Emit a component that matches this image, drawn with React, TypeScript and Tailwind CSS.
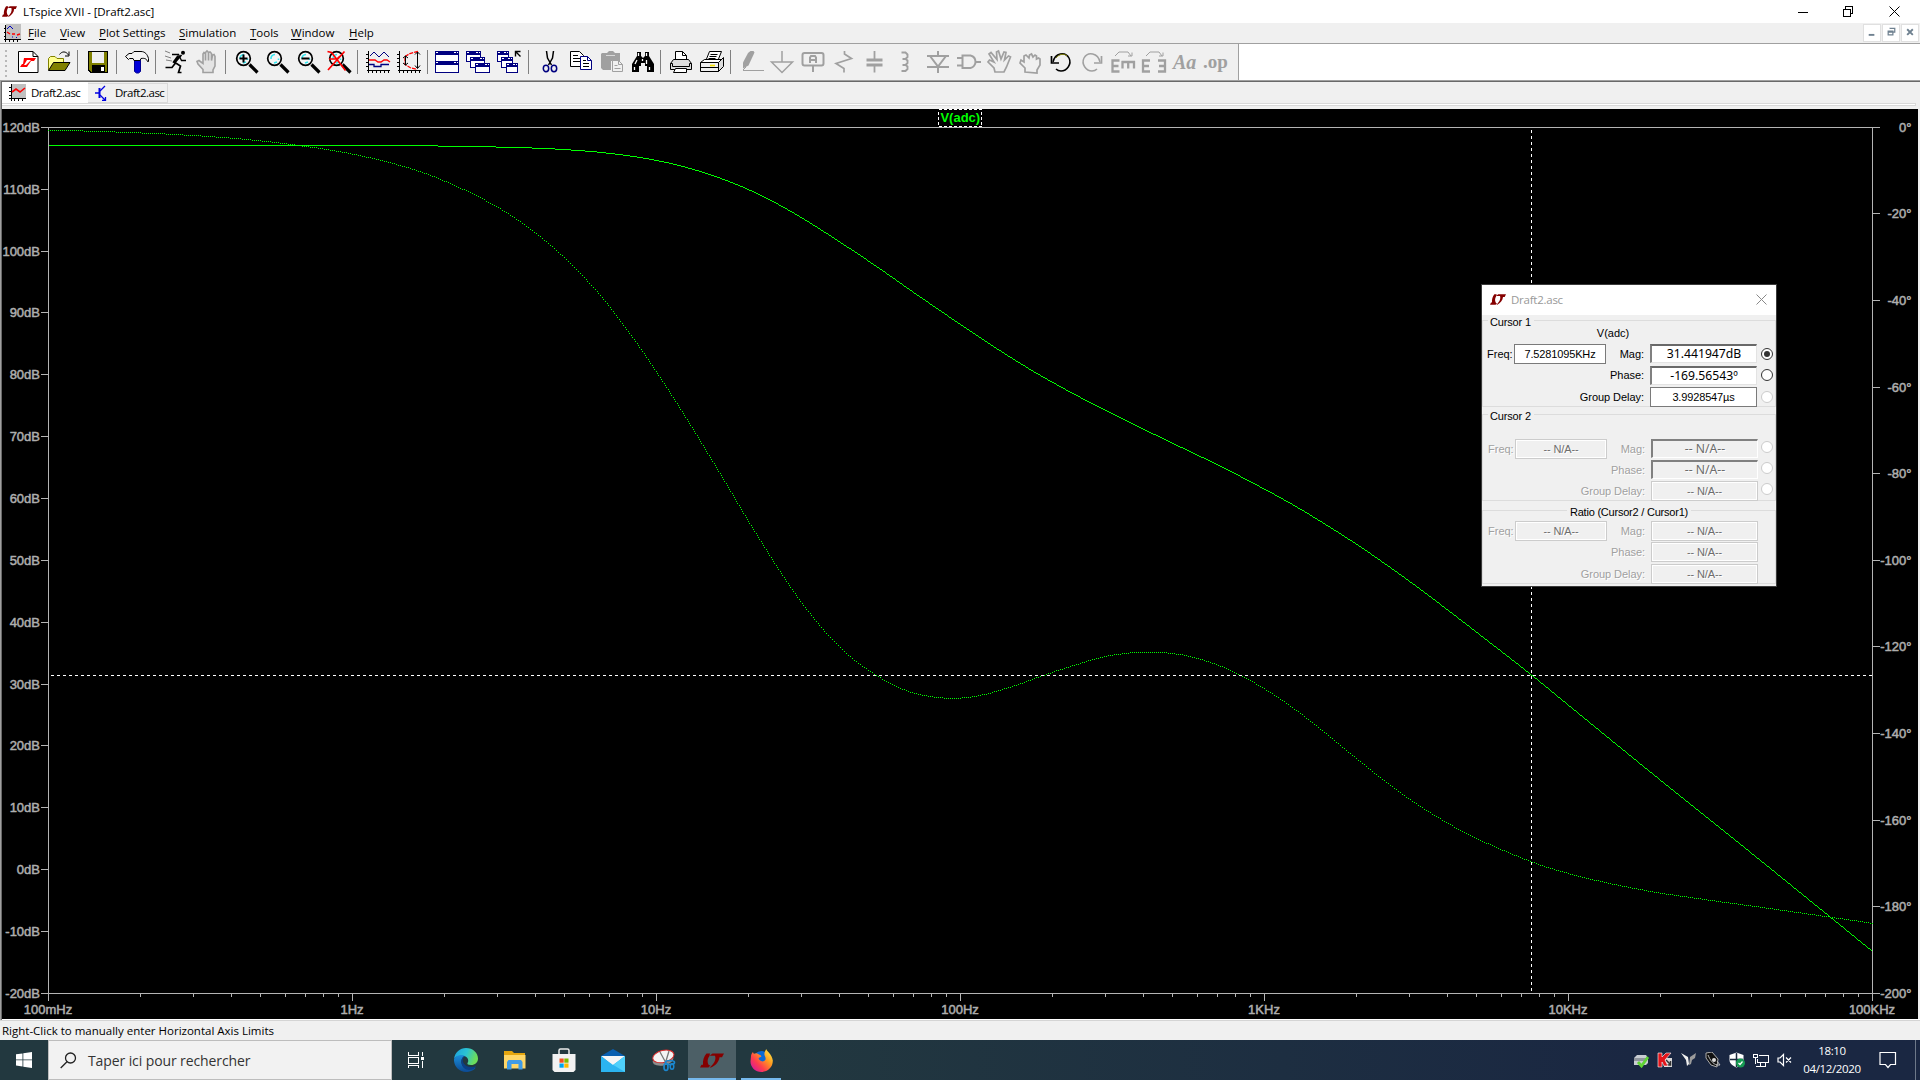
import React from "react";

const UI = "font-['Open_Sans','Noto_Sans',sans-serif]";
const G = "#a0a0a0";

function LtLogo({ className, hole = "transparent" }: { className: string; hole?: string }) {
  return (
    <svg viewBox="0 0 48 32" className={className} preserveAspectRatio="none">
      <path d="M24 4C16 8 13 20 19 28C27 24 33 12 31 4Z" fill={hole} />
      <path
        fillRule="evenodd"
        fill="#850000"
        d="M13 1H25C15 7 13 19 18 26H21L17 31H0L3 25H6C5 16 8 7 13 1ZM20 1H48L44 9H39C38 19 31 27 22 31H19C28 24 33 14 30 6H19Z"
      />
    </svg>
  );
}

function Icon({ children, w = "w-[31px]" }: { children: React.ReactNode; w?: string }) {
  return (
    <div className={`flex ${w} shrink-0 justify-center`}>
      <svg viewBox="0 0 24 24" className="h-6 w-6 shrink-0 overflow-visible" fill="none" stroke="#000" strokeWidth="1">
        {children}
      </svg>
    </div>
  );
}

function Group({ w, children }: { w: string; children: React.ReactNode }) {
  return <div className={`flex h-6 items-center justify-center ${w}`}>{children}</div>;
}

function Sep() {
  return <div className="h-6 w-px shrink-0 bg-[#808080]" />;
}

function Lens({ children }: { children?: React.ReactNode }) {
  return (
    <>
      <path d="M14.500 14.500L22.500 22.500" strokeWidth="3.200" />
      <circle cx="8.500" cy="8.500" r="6.800" strokeWidth="1.700" fill="#f4f4f4" />
      <path d="M5 9A4 4 0 0 1 9 4.500M12.500 8.500V10M8 13l3-1" stroke="#2fe6ef" strokeWidth="1.500" />
      {children}
    </>
  );
}

function Win({ x, y, w = 14, h = 10 }: { x: number; y: number; w?: number; h?: number }) {
  return (
    <g shapeRendering="crispEdges">
      <rect x={x + 0.5} y={y + 0.5} width={w} height={h} fill="#fff" stroke="#000080" />
      <rect x={x} y={y} width={w + 1} height="4" fill="#000080" stroke="none" />
      <path d={`M${x + 1} ${y + 1.5}h2M${x + w - 4} ${y + 1.5}h2M${x + w - 1} ${y + 1.5}h1`} stroke="#fff" />
    </g>
  );
}

const FIST = "M7 22v-4l-5-5 1-3 3 2V6l2-1 3 3 .5-3 2-1 1.500 3 2-2 1.500 1v3l2-1 1.500 1v6l-3 5v3z";

function Toolbar() {
  return (
    <div className="flex h-9 w-[1239px] items-center border-r border-[#a0a0a0] bg-[#f0f0f0]">
      <svg viewBox="0 0 13 36" className="h-9 w-[13px] shrink-0">
        {[6, 11, 16, 21, 26, 31].map((y) => (
          <rect key={y} x="5" y={y} width="2" height="2" fill="#b8b8b8" />
        ))}
      </svg>
      <Group w="w-[64px] pr-1">
        <Icon>
          <path d="M2.500 1.500H17l5 5V22.500H2.500z" fill="#fff" />
          <path d="M17 1.500V6.500H22" />
          <path d="M8 8h12l-2 3h-3l-4 6H4l2-3h1zM11 10l-3 5h2l5-5z" fill="#f00" stroke="none" fillRule="evenodd" />
        </Icon>
        <Icon>
          <path d="M1.500 20V8.500l2-2H8l2 2h6.500v4" fill="#ffff90" stroke="#808000" />
          <path d="M1.500 20.500L6.500 12.500H23L18 20.500z" fill="#808000" />
          <path d="M12.500 4.500C15 1 19 1 21.500 5M22 1.500v4.500h-4" />
        </Icon>
      </Group>
      <Sep />
      <Group w="w-[38px] pl-0.5">
        <Icon>
          <g shapeRendering="crispEdges">
            <path d="M2 1h20v22H4l-2-2z" fill="#000" stroke="none" />
            <path d="M3 2h3v11h12V2h3v20h-2v-7H6v7H5l-2-2z" fill="#808000" stroke="none" />
            <path d="M6 2h12v11H6z" fill="#efefef" stroke="none" />
            <path d="M15 17h3v4h-3z" fill="#fff" stroke="none" />
          </g>
        </Icon>
      </Group>
      <Sep />
      <Group w="w-[38px] pl-0.5">
        <Icon>
          <path d="M9.500 9.500h6v12l-2 1.500h-2l-2-1.500z" fill="#0000d8" stroke="#000090" />
          <path d="M.5 6.500L4 3.500h3l2-2h7c4 0 6.500 3 7.500 7v3h-1c-1-3-3-3.500-6.500-3l-1 2h-6l-1-2H4.500l-1 1z" fill="#f4f4f4" />
        </Icon>
      </Group>
      <Sep />
      <Group w="w-[69px] pl-0.5">
        <Icon>
          <circle cx="19" cy="2.800" r="2" fill="#000" stroke="none" />
          <path d="M17.500 5L11 12.500l5.500 3.500-2 6.500h3M11.500 13L8 17.500H1.500" strokeWidth="1.700" />
          <path d="M8 4.500h6.500l3 6H22" strokeWidth="1.300" />
          <path d="M14.500 6L9.500 13" strokeWidth="2.800" />
          <path d="M1 1l5 2M1 6l6 2M2 10l6 1" stroke="#808080" />
        </Icon>
        <Icon>
          <path
            d="M8 22.500v-3L3 14l-1-2.500 2-1 4 3V4l1-1.500L10.500 4V10.500 2.500L12 1l1.500 1.500v8V2.500L15 2l1.500 1.500v7L17.500 5 19 4.500l1 2V16l-2 4v2.500z"
            fill="#e4e4e4"
            stroke={G}
            strokeWidth="1.600"
          />
        </Icon>
      </Group>
      <Sep />
      <Group w="w-[131px] pl-1">
        <Icon>
          <Lens>
            <path d="M8.500 4.500v8M4.500 8.500h8" strokeWidth="2" />
          </Lens>
        </Icon>
        <Icon>
          <Lens />
        </Icon>
        <Icon>
          <Lens>
            <path d="M4.500 8.500h8" strokeWidth="2" />
          </Lens>
        </Icon>
        <Icon>
          <Lens>
            <path d="M-.5 1.500l4 1 14 18M16.500 1.500L0 20M1 9h8l3-3" stroke="#f00" strokeWidth="1.700" />
          </Lens>
        </Icon>
      </Group>
      <Sep />
      <Group w="w-[69px] pl-0.5">
        <Icon>
          <path d="M2.500 1v22M.5 20.500H24M0 4.500h3M0 8.500h3M0 12.500h3M0 16.500h3M6.500 20v3M10.500 20v3M14.500 20v3M18.500 20v3M22.500 20v3" shapeRendering="crispEdges" />
          <path d="M4 6l4-4 5 5 5-5 5 5" stroke="#000080" />
          <path d="M3 10h6l3 2h3l3-2h3l3 2" stroke="#f00" strokeWidth="1.400" />
          <path d="M3 14.500h5v2h7v-2h8" stroke="#000080" strokeWidth="1.300" />
        </Icon>
        <Icon>
          <path d="M2.500 1v22M.5 20.500H24M0 4.500h3M0 8.500h3M0 12.500h3M0 16.500h3M6.500 20v3M10.500 20v3M14.500 20v3M18.500 20v3M22.500 20v3" shapeRendering="crispEdges" />
          <path d="M21 1.500l-8 2-5 3v8l5 3 7 2" stroke="#f00" strokeWidth="1.300" strokeDasharray="4 1" />
          <path d="M20.500 2v16M18 4.500L20.500 2 23 4.500M18 15.500l2.500 3 2.500-3M8.500 6v9M6 8l2.500-2L11 8M6 13l2.500 2 2.500-2" />
        </Icon>
      </Group>
      <Sep />
      <Group w="w-[100px]">
        <Icon>
          <Win x={0} y={1} w={23} h={10} />
          <Win x={0} y={11} w={23} h={11} />
        </Icon>
        <Icon>
          <Win x={0} y={1} />
          <Win x={4} y={7} />
          <Win x={9} y={13} h={9} />
        </Icon>
        <Icon>
          <Win x={0} y={1} w={11} />
          <Win x={4} y={7} w={11} />
          <Win x={9} y={13} w={11} h={9} />
          <path d="M18.500 6.500v-5h5M18.500 1.500l5 5" strokeWidth="1.400" />
        </Icon>
      </Group>
      <Sep />
      <Group w="w-[131px] pl-1">
        <Icon>
          <path d="M8.500 1l1 7 4 7M15.500 1l-1 7-4 7" strokeWidth="1.500" />
          <ellipse cx="8" cy="18.500" rx="2.700" ry="3.200" stroke="#000080" strokeWidth="1.500" />
          <ellipse cx="16" cy="18.500" rx="2.700" ry="3.200" stroke="#000080" strokeWidth="1.500" />
        </Icon>
        <Icon>
          <path d="M1.500 1.500h9l4 4v11h-13z" fill="#fff" />
          <path d="M4 5.500h5M4 8.500h7M4 11.500h7" />
          <path d="M11.500 6.500h7l4 4v9h-11z" fill="#fff" stroke="#000080" />
          <path d="M18.500 6.500v4h4" stroke="#000080" />
          <path d="M14 10.500h3M14 13.500h6M14 16.500h6" />
        </Icon>
        <Icon>
          <path d="M2 3h5l2-2h4l2 2h5v8h-9v9H3l-2-2V4z" fill={G} stroke="none" />
          <path d="M6 5.500h9" stroke="#d8d8d8" />
          <path d="M12.500 10.500h6l4 4v7h-10z" fill="#f0f0f0" stroke={G} />
          <path d="M18.500 10.500v4h4M14.500 15.500h3M14.500 18.500h6" stroke={G} />
        </Icon>
        <Icon>
          <path d="M6 2h4v4l2 2 2-2V2h4v4l5 8v8h-7v-6h-2v-3h-4v3H8v6H1v-8l5-8z" fill="#000" stroke="none" />
          <path d="M7.500 3v3M15.500 3v3M4 14l2-4M15.500 14v-4M3.500 17v3M18.500 17v3M11.500 9v2" stroke="#fff" strokeWidth="1.300" />
        </Icon>
      </Group>
      <Sep />
      <Group w="w-[69px] pl-0.5">
        <Icon>
          <path d="M6.500 9.500v-8h7l4 4v4" fill="#fff" />
          <path d="M13.500 1.500v4h4" />
          <path d="M1.500 19.500v-6l3-4h15l3 4v6z" fill="#ddd" />
          <path d="M1.500 13.500h2v3h17v-3h2" />
          <path d="M6.500 18.500h11v4h-13z" fill="#fff" />
        </Icon>
        <Icon>
          <path d="M5.500 11.500l4-10h12l-4 10z" fill="#fff" />
          <path d="M10.500 4.500h7M9.500 6.500h7M8.500 8.500h7" />
          <path d="M.5 12.500l4-3h18l-4 3z" fill="#fff" />
          <path d="M.5 12.500h18v9H.5zM.5 17.500h18" fill="#f0f0f0" />
          <path d="M18.500 12.500l5-5v9l-5 5z" fill="#ddd" />
          <path d="M10 15.500h5" stroke="#f4e000" strokeWidth="1.600" />
        </Icon>
      </Group>
      <Sep />
      <div className="flex h-6 w-[507px] shrink-0 items-center justify-center">
        <Icon w="w-[30.8px]">
          <g transform="translate(-1 0)">
            <path d="M9.500 1h3l1 1.500-6 13L2 18.500v-6L7 3z" fill={G} stroke="none" />
            <path d="M2 20.500h21M2 20l3-3" stroke={G} />
          </g>
        </Icon>
        <Icon w="w-[30.8px]">
          <path transform="translate(-2 0)" d="M12 1v11M1.500 12h21L12 22.500z" stroke={G} strokeWidth="1.500" />
        </Icon>
        <Icon w="w-[30.8px]">
          <g transform="translate(-2 0)">
            <rect x="1.500" y="3" width="21" height="12.500" rx="2" stroke={G} strokeWidth="2" />
            <path d="M12 15.500V22M9 13V7.500l1-1.500h4l1 1.500V13M9 10h6" stroke={G} strokeWidth="2" />
          </g>
        </Icon>
        <Icon w="w-[30.8px]">
          <path transform="translate(-2 0)" d="M12.500 1v3l7 4.500L4 13.500l8 5V22.500" stroke={G} strokeWidth="1.700" />
        </Icon>
        <Icon w="w-[30.8px]">
          <g transform="translate(-2.500 0)">
            <path d="M12 1v9M12 15v7.500" stroke={G} strokeWidth="1.800" />
            <path d="M4 10h16M4 15h16" stroke={G} strokeWidth="3" />
          </g>
        </Icon>
        <Icon w="w-[30.8px]">
          <path
            transform="translate(-3 0)"
            d="M8.500 2.500h4l2 2v2.500l-2 2h-3M9.500 9h3l2 1.500v2.500l-2 2h-3M9.500 15h3l2 1.500v2.500l-2 2h-4"
            stroke={G}
            strokeWidth="1.900"
          />
        </Icon>
        <Icon w="w-[30.8px]">
          <path d="M12 1v4M12 17v6M1 6h22M1 17h22M4 6l8 10.500L20 6" stroke={G} strokeWidth="2" />
        </Icon>
        <Icon w="w-[30.8px]">
          <path d="M5.500 5.500h8c4 1 5 4 5 6.500s-2 5.500-5 6h-8zM0 8h5.500M0 15.500h5.500M18.500 12H24" stroke={G} strokeWidth="2" />
        </Icon>
        <Icon w="w-[30.8px]">
          <path
            transform="translate(-1 0)"
            d="M8 22l-1-4-6-6 1.500-2L7 12 2 4l2-1.500 6 7L9.500 2l2-1L14 9l3-7 2 .5L17.500 10l4-4 2 1-4 10-2.500 5z"
            stroke={G}
            strokeWidth="1.700"
          />
        </Icon>
        <Icon w="w-[30.8px]">
          <path transform="translate(-1 0)" d={FIST} stroke={G} strokeWidth="1.700" />
        </Icon>
        <Icon w="w-[30.8px]">
          <path d="M4 12C6 3 16 1 20 8c3 6-2 13-8 13-3 0-4-1-5-2" strokeWidth="1.500" />
          <path d="M7 8c3-4 8-5 11-2" stroke="#808000" />
          <path d="M2.500 6v7H10" strokeWidth="1.700" />
        </Icon>
        <Icon w="w-[30.8px]">
          <path d="M20 12C18 3 8 1 4 8c-3 6 2 13 8 13 3 0 4-1 5-2" stroke={G} strokeWidth="1.500" />
          <path d="M21.500 6v7H14" stroke={G} strokeWidth="1.700" />
        </Icon>
        <Icon w="w-[30.8px]">
          <path d="M8.500 10.500H1.500v11h7M1.500 16h6M10.500 12h13.500M11.500 11v7.500M17.200 11v7.500M23 11v7.500" stroke={G} strokeWidth="2.300" />
          <path d="M4 6l4-4h9l3 4M17 6h4V2.500" stroke={G} />
        </Icon>
        <Icon w="w-[30.8px]">
          <path d="M8 10.500H1v11h7M1 16h6M16 10.500h7v11h-7M17 16h6" stroke={G} strokeWidth="2.300" />
          <path d="M4 6l4-4h9l3 4M17 6h4V2.500" stroke={G} />
        </Icon>
        <div className="flex w-[30.8px] justify-center font-['Liberation_Serif',serif] text-[20px] leading-6 font-bold text-[#a0a0a0] italic">Aa</div>
        <div className="flex w-[30.8px] justify-center font-['Liberation_Serif',serif] text-[19px] leading-[22px] font-bold text-[#a0a0a0]">.op</div>
      </div>
    </div>
  );
}

const MAG: number[][] = [
  [48, 145.3], [300, 145.3], [390, 145.5], [438, 146], [500, 147.1], [534, 148.1], [556, 149.1], [586, 151.1], [606, 153], [639.5, 157.5],
  [679, 165.6], [718.6, 177.8], [758.2, 194.3], [797.7, 215.7], [837.2, 240.6], [876.8, 267], [916.3, 294.6], [955.9, 321.7],
  [995.4, 348], [1035, 372.6], [1074.5, 394.6], [1100, 407.7], [1140, 427.7], [1180, 447], [1220, 466.3], [1260, 487],
  [1290, 503.4], [1320, 521.3], [1356.1, 544.3], [1383.7, 563.2], [1411.2, 582.9], [1438.8, 603.6], [1475.5, 631.8],
  [1531.5, 675.4], [1568.2, 705.4], [1659.1, 779.5], [1751, 853.2], [1828.1, 915.7], [1872, 951.4],
];

const PHASE: number[][] = [
  [48, 130], [84, 131], [116, 132], [142, 133], [184, 135], [216, 137], [261, 141], [302, 146], [339, 151.7], [371.4, 158.3],
  [408.2, 168], [438.4, 178.7], [473.5, 194.6], [506, 212.5], [530.6, 229.7], [555, 249.6], [579.6, 273.3], [604, 300.2],
  [639.5, 347.5], [679, 407], [718.6, 471.5], [758.2, 537.5], [797.7, 597.7], [837.2, 645.1], [872.8, 673.4], [908.4, 691.5],
  [948, 698.3], [980, 695.3], [1015, 685.5], [1043.3, 675.3], [1070, 666.5], [1103, 657], [1133, 652.6], [1153, 652.2],
  [1173, 653.7], [1193, 657.3], [1220, 666], [1240, 675.3], [1270, 692.5], [1293, 708.3], [1320, 729], [1356, 758.6],
  [1402, 794.3], [1448, 823.6], [1482.4, 841.4], [1531.5, 862], [1568.2, 873.6], [1613.2, 884.3], [1659, 892.9],
  [1718.8, 901.6], [1751, 906], [1829, 917], [1872, 923.3],
];

/** Cubic Hermite interpolation of a list of points, one integer y for each x. */
function sample(points: number[][]): number[] {
  const slope = points.map((_, i) => {
    const a = points[Math.max(0, i - 1)];
    const b = points[Math.min(points.length - 1, i + 1)];
    return (b[1] - a[1]) / (b[0] - a[0]);
  });
  const out: number[] = [];
  let k = 0;
  for (let x = 48; x <= 1872; x++) {
    while (k < points.length - 2 && x > points[k + 1][0]) k++;
    const [x0, y0] = points[k];
    const [x1, y1] = points[k + 1];
    const h = x1 - x0;
    const t = (x - x0) / h;
    const y =
      (2 * t ** 3 - 3 * t ** 2 + 1) * y0 +
      (t ** 3 - 2 * t ** 2 + t) * h * slope[k] +
      (3 * t ** 2 - 2 * t ** 3) * y1 +
      (t ** 3 - t ** 2) * h * slope[k + 1];
    out.push(Math.floor(y));
  }
  return out;
}

const magPath = "M" + sample(MAG).map((y, i) => `${48.5 + i} ${y + 0.5}`).join("L");

const phasePath = (() => {
  const ys = sample(PHASE);
  let n = 0;
  let d = "";
  ys.forEach((y, i) => {
    const next = i + 1 < ys.length ? ys[i + 1] : y;
    const steps = Math.max(1, Math.abs(next - y));
    for (let s = 0; s < steps; s++) {
      if (n % 2 === 0) d += `M${48 + i} ${y + s * Math.sign(next - y)}h1v1h-1z`;
      n++;
    }
  });
  return d;
})();

const DB = Array.from({ length: 15 }, (_, i) => 120 - 10 * i);
const DEG = Array.from({ length: 11 }, (_, i) => -20 * i);
const HZ = ["100mHz", "1Hz", "10Hz", "100Hz", "1KHz", "10KHz", "100KHz"];

function Plot() {
  let ticks = "";
  DB.forEach((_, i) => (ticks += `M41 ${Math.floor(127.3 + i * 61.857) + 0.5}h8`));
  DEG.forEach((_, i) => (ticks += `M1872 ${Math.floor(127.3 + i * 86.6) + 0.5}h8`));
  for (let d = 0; d < 6; d++) {
    ticks += `M${48.5 + d * 304} 993v8`;
    for (let m = 2; m < 10; m++) ticks += `M${Math.round(48 + 304 * (d + Math.log10(m))) + 0.5} 993v4`;
  }
  return (
    <svg
      viewBox="2 109 1916 910"
      className="block h-[910px] w-[1916px] bg-black font-['Liberation_Sans',Arial,sans-serif] text-[13px]"
    >
      <g stroke="#b4b4b4" fill="none" shapeRendering="crispEdges">
        <path d="M41 127.500H1880M41 993.500H1880M48.500 127V1001M1872.500 127V1001" />
        <path d={ticks} />
      </g>
      <path d={phasePath} fill="#00ff00" shapeRendering="crispEdges" />
      <path d={magPath} fill="none" stroke="#00ff00" shapeRendering="crispEdges" />
      <g stroke="#fff" strokeDasharray="3 3" shapeRendering="crispEdges">
        <path d="M51 675.500H1872" />
        <path d="M1531.500 130V993" />
      </g>
      <g fill="#aeaeae" stroke="#aeaeae" strokeWidth="0.500">
        {DB.map((v, i) => (
          <text key={v} x="40" y={Math.floor(132.3 + i * 61.857)} textAnchor="end">{`${v}dB`}</text>
        ))}
        {DEG.map((v, i) => (
          <text key={v} x="1911.500" y={Math.floor(132.3 + i * 86.6)} textAnchor="end">{`${v === 0 ? 0 : v}°`}</text>
        ))}
        {HZ.map((v, i) => (
          <text key={v} x={48 + i * 304} y="1014" textAnchor="middle">
            {v}
          </text>
        ))}
      </g>
      <rect x="938.500" y="109.500" width="43" height="17" fill="#000" stroke="#fff" strokeDasharray="3 2" shapeRendering="crispEdges" />
      <text x="960.300" y="122" textAnchor="middle" fill="#00ff00" className="font-bold">
        V(adc)
      </text>
    </svg>
  );
}

function Field({ v, w, kind, big = false }: { v: string; w: string; kind: "on" | "off" | "sunkOn" | "sunkOff"; big?: boolean }) {
  const look = {
    on: "h-5 border border-[#7a7a7a] bg-white text-black",
    off: "h-5 border border-[#cccccc] bg-[#f0f0f0] text-[#6d6d6d] shadow-[inset_0_0_0_1px_#fff]",
    sunkOn: "h-[19px] border-t-2 border-l-2 border-r border-b border-t-[#696969] border-l-[#808080] border-r-[#e3e3e3] border-b-[#e3e3e3] bg-white text-black",
    sunkOff: "h-[19px] border-t-2 border-l-2 border-r border-b border-t-[#808080] border-l-[#808080] border-r-[#fff] border-b-[#fff] bg-[#f0f0f0] text-[#6d6d6d]",
  }[kind];
  return (
    <div
      className={`flex shrink-0 items-center justify-center whitespace-nowrap ${w} ${look} ${
        big ? "font-['Noto_Sans',sans-serif] text-[12.2px]" : "text-[11px] tracking-[-0.15px]"
      }`}
    >
      {v}
    </div>
  );
}

function Radio({ state }: { state: "sel" | "on" | "off" | "none" }) {
  if (state === "none") return <div className="w-3" />;
  return (
    <div
      className={`flex h-3 w-3 items-center justify-center rounded-full border bg-white ${
        state === "off" ? "border-[#cccccc]" : "border-[#333333]"
      }`}
    >
      {state === "sel" && <div className="h-1.5 w-1.5 rounded-full bg-[#333333]" />}
    </div>
  );
}

type RowProps = {
  freq?: string;
  label: string;
  v: string;
  radio: "sel" | "on" | "off" | "none";
  enabled: boolean;
  sunk?: boolean;
  h: string;
};

function Row({ freq, label, v, radio, enabled, sunk, h }: RowProps) {
  const text = enabled ? "text-black" : "text-[#a0a0a0] [text-shadow:1px_1px_0_#fff]";
  return (
    <div className={`flex items-center ${h} ${text} ${enabled ? "" : "pl-px"}`}>
      <div className="w-8 pl-[5px]">{freq ? "Freq:" : ""}</div>
      <div className="w-[92px]">{freq && <Field v={freq} w="w-[92px]" kind={enabled ? "on" : "off"} />}</div>
      <div className="-ml-8 flex-1 pr-[6px] text-right tracking-[-0.05px] whitespace-nowrap">{label}</div>
      <Field v={v} w="w-[107px]" kind={sunk ? (enabled ? "sunkOn" : "sunkOff") : enabled ? "on" : "off"} big={sunk} />
      <div className={`shrink-0 ${enabled ? "w-[19px] pl-[4px]" : "w-[18px] pb-[3px] pl-[3px]"}`}>
        <Radio state={radio} />
      </div>
    </div>
  );
}

function CursorDialog() {
  return (
    <div className="absolute top-[284px] left-[1481px] h-[303px] w-[296px] border border-[#3a3a3a] bg-[#f0f0f0] font-['Liberation_Sans',Arial,sans-serif] text-[11px] leading-3 text-black">
      <div className="flex h-[30px] items-center bg-white pr-[9px] pb-px pl-[8px]">
        <LtLogo className="h-[11px] w-4" />
        <div className={`ml-[5px] flex-1 text-[11.5px] tracking-[-0.25px] text-[#999999] ${UI}`}>Draft2.asc</div>
        <svg viewBox="0 0 11 11" className="h-[11px] w-[11px]">
          <path d="M.5.5l10 10M10.500.5l-10 10" stroke="#888" />
        </svg>
      </div>
      <div className="mt-[5px] h-[87px] border border-[#dcdcdc]">
        <div className="-mt-[5px] ml-[5px] w-fit bg-[#f0f0f0] pr-[3px] pl-[2px] tracking-[-0.15px]">Cursor 1</div>
        <div className="h-[9px] w-[260px] text-center leading-[11px]">V(adc)</div>
        <div className="mt-[6px] -mr-px -ml-px">
          <Row h="h-[21px]" freq="7.5281095KHz" label="Mag:" v="31.441947dB" radio="sel" enabled sunk />
          <Row h="h-[22px]" label="Phase:" v="-169.56543º" radio="on" enabled sunk />
          <Row h="h-[21px]" label="Group Delay:" v="3.9928547µs" radio="off" enabled />
        </div>
      </div>
      <div className="mt-[7px] h-[87px] border border-[#dcdcdc]">
        <div className="-mt-[5px] ml-[5px] w-fit bg-[#f0f0f0] pr-[3px] pl-[2px] tracking-[-0.15px]">Cursor 2</div>
        <div className="mt-[16px] -mr-px -ml-px">
          <Row h="h-[21px]" freq="-- N/A--" label="Mag:" v="-- N/A--" radio="off" enabled={false} sunk />
          <Row h="h-[21px]" label="Phase:" v="-- N/A--" radio="off" enabled={false} sunk />
          <Row h="h-[21px]" label="Group Delay:" v="-- N/A--" radio="off" enabled={false} />
        </div>
      </div>
      <div className="mt-[9px] h-[74px] border border-[#dcdcdc]">
        <div className="mx-auto -mt-[5px] w-fit bg-[#f0f0f0] px-[3px] tracking-[-0.22px]">Ratio (Cursor2 / Cursor1)</div>
        <div className="mt-[2px] -mr-px -ml-px">
          <Row h="h-[21px]" freq="-- N/A--" label="Mag:" v="-- N/A--" radio="none" enabled={false} />
          <Row h="h-[22px]" label="Phase:" v="-- N/A--" radio="none" enabled={false} />
          <Row h="h-[21px]" label="Group Delay:" v="-- N/A--" radio="none" enabled={false} />
        </div>
      </div>
    </div>
  );
}

function Task({ children, cls = "" }: { children: React.ReactNode; cls?: string }) {
  return <div className={`flex h-10 w-12 items-center justify-center ${cls}`}>{children}</div>;
}

function Tray({ children }: { children: React.ReactNode }) {
  return (
    <svg viewBox="0 0 16 16" className="h-4 w-4" fill="none">
      {children}
    </svg>
  );
}

function Taskbar() {
  return (
    <div className={`flex h-10 items-center bg-linear-to-r from-[#22383f] from-40% to-[#1a2742] to-85% text-white ${UI}`}>
      <div className="flex w-12 justify-center">
        <svg viewBox="0 0 16 16" className="h-4 w-4" fill="#fff">
          <path d="M0 2.300L6.500 1.400V7.500H0zM7.300 1.300L16 0V7.500H7.300zM0 8.300H6.500V14.500L0 13.600zM7.300 8.300H16V16L7.300 14.700z" />
        </svg>
      </div>
      <div className="flex h-10 w-[344px] items-center border border-[#bdbdbd] bg-[#f2f2f2] pl-[11px] text-[#333]">
        <svg viewBox="0 0 17 17" className="h-[17px] w-[17px]" fill="none" stroke="#222" strokeWidth="1.300">
          <circle cx="10.500" cy="6" r="5" />
          <path d="M7 9.700L.7 16" />
        </svg>
        <div className="ml-[11px] pt-px text-[14px] leading-5 tracking-[-0.1px]">Taper ici pour rechercher</div>
      </div>
      <div className="flex gap-px">
        <Task cls="mr-px">
          <svg viewBox="0 0 16 16" className="h-4 w-4" fill="none" stroke="#fff" shapeRendering="crispEdges">
            <path d="M.5 0v3.500h10V0M.5 5.500h10v6H.5zM.5 16v-2.500h10V16M14.500 0v4M14.500 9v7" />
            <path d="M13 5h3v3h-3z" fill="#fff" stroke="none" />
          </svg>
        </Task>
        <Task>
          <svg viewBox="0 0 24 24" className="h-6 w-6">
            <defs>
              <linearGradient id="edgeTop" x1="0" y1="0" x2="1" y2="0.300">
                <stop offset="0" stopColor="#1ba0e0" />
                <stop offset="0.550" stopColor="#2bc3d2" />
                <stop offset="1" stopColor="#6ddc5a" />
              </linearGradient>
              <linearGradient id="edgeLow" x1="0" y1="0" x2="0" y2="1">
                <stop offset="0" stopColor="#1b8fdc" />
                <stop offset="1" stopColor="#0c4a93" />
              </linearGradient>
            </defs>
            <path d="M0 11C1 4 6 0 12 0c7 0 12 5 12 10.500 0 4-3 6.500-7 6.500-3 0-4-1-3.500-2 1.500-1.500 1-6-3.500-7C5 7 1 9 0 11z" fill="url(#edgeTop)" />
            <path d="M0 11C2 7 8 6 11 8c-3 1-4 4-3.500 7 .7 4 5 7 11 5.500 1.500-.5 2.500-1 3-.7C20 22.500 16 24 12 24 5 24-.5 18 0 11z" fill="url(#edgeLow)" />
            <path d="M7.500 15C7 11 9 8 11 8c-5 4-1 12 8 11l3-1c-1 3-4 4-7 4-4 0-7-3-7.500-7z" fill="#0b3f86" />
          </svg>
        </Task>
        <Task>
          <svg viewBox="0 0 22 20" className="h-5 w-[22px]">
            <path d="M0 1h8l2 2h11v15H0z" fill="#e5a50e" />
            <path d="M0 5h21.500v13.500H0z" fill="#ffd667" />
            <path d="M3 19.500V12l1.500-2h12.500l1.500 2v7.500h-4V14H7.500v5.500z" fill="#3f9be6" />
          </svg>
        </Task>
        <Task>
          <svg viewBox="0 0 24 24" className="h-6 w-6">
            <path d="M7 7V2.500C7 1 7.500 1 8.500 1h7C17 1 17 1.500 17 2.500V7" fill="none" stroke="#ececec" strokeWidth="1.500" />
            <path d="M.5 6h23v16l-2 2h-19l-2-2z" fill="#f2f2f2" />
            <path d="M7.500 10.500h4.200v4.200H7.500z" fill="#f25022" />
            <path d="M12.300 10.500h4.200v4.200h-4.200z" fill="#7fba00" />
            <path d="M7.500 15.500h4.200v4.200H7.500z" fill="#00a4ef" />
            <path d="M12.300 15.500h4.200v4.200h-4.200z" fill="#ffb900" />
          </svg>
        </Task>
        <Task>
          <svg viewBox="0 0 24 23" className="h-[23px] w-6">
            <path d="M0 7L12 0l12 7v5H0z" fill="#0a5fb0" />
            <path d="M0 7h24L12 17z" fill="#f5f5f5" />
            <path d="M0 7l12 9 12-9v16H0z" fill="#2bb4f0" />
            <path d="M24 7v16L9 14l3 2z" fill="#4fd0fb" />
          </svg>
        </Task>
        <Task cls="pl-1">
          <svg viewBox="0 0 24 24" className="h-6 w-6" fill="none">
            <ellipse cx="11" cy="12" rx="10.500" ry="5.500" fill="#8d8d8d" transform="rotate(-12 11 12)" />
            <ellipse cx="11.500" cy="8.500" rx="10.800" ry="6" fill="#f4f4f4" stroke="#d62a2a" transform="rotate(-14 11 9)" />
            <path d="M8 4l6 11M17 3l-3 10" stroke="#777" strokeWidth="1.300" />
            <ellipse cx="18" cy="14.500" rx="4.500" ry="2" stroke="#1b87cf" strokeWidth="1.700" />
            <ellipse cx="14" cy="19" rx="2" ry="3.500" stroke="#1b87cf" strokeWidth="1.700" />
            <ellipse cx="20" cy="18.500" rx="1.800" ry="2.800" stroke="#1b87cf" strokeWidth="1.500" />
          </svg>
        </Task>
        <Task cls="ml-px border-b-2 border-[#76b9ed] bg-[#4c5f66]">
          <LtLogo className="mt-0.5 h-[15px] w-6" />
        </Task>
        <Task cls="relative">
          <svg viewBox="0 0 24 24" className="h-[23px] w-[23px]">
            <defs>
              <linearGradient id="fox" x1="1" y1="0.100" x2="0.200" y2="0.900">
                <stop offset="0" stopColor="#fff14a" />
                <stop offset="0.400" stopColor="#ff9a1f" />
                <stop offset="0.750" stopColor="#ff3d4d" />
                <stop offset="1" stopColor="#e0218a" />
              </linearGradient>
            </defs>
            <circle cx="12" cy="11" r="9" fill="#0a6ad6" />
            <path d="M1 8c0-2 1-4 2-5l1 2 3-.5C9 6 11 6 12 7.500c-1 1.500-3 1-3 2.500 1 3 5 4 7 1.500 1-3-1-4-1-6 0-2 1-4 2-5.500 0 2 6 5 6.800 12C24 19 18.500 24 12 24S.5 19 .5 13z" fill="url(#fox)" />
          </svg>
          <div className="absolute bottom-0 left-1 h-0.5 w-10 bg-[#76b9ed]" />
        </Task>
      </div>
      <div className="ml-auto flex items-center gap-2">
        <Tray>
          <path d="M1 6l3-3h9l2 3v5l-2 2H1z" fill="#c9cdd2" />
          <path d="M1 6h13v3H1z" fill="#8f959c" />
          <path d="M5 10l3.500 4L15 5" stroke="#5fd435" strokeWidth="2.800" />
        </Tray>
        <Tray>
          <path d="M7 6h8v9H7z" fill="#d9d9d9" />
          <path d="M9 8l4 4M13.500 9v4h-4" stroke="#333" strokeWidth="1.500" />
          <path d="M1 1h4v4l4-4h5L8 8l3 6H7L5 10v5H1z" fill="#e3151b" stroke="#fff" strokeWidth="0.600" />
        </Tray>
        <Tray>
          <path d="M0 1l7 4 1 7-2 2-1-6z" fill="#f0f0f0" />
          <path d="M15 1l-6 4-1 8 2-1 1-4 3-2z" fill="#9c9c9c" />
        </Tray>
        <Tray>
          <path d="M1 1l6-1 6 7-1 8-6-2-5-7z" fill="#111" stroke="#aaa" />
          <path d="M3 3c2 5 5 9 9 10M12 9l3 4M11 13h4" stroke="#bbb" />
          <circle cx="9" cy="8" r="2" fill="#ddd" />
        </Tray>
        <Tray>
          <path d="M7.500.5L14.500 3v5c0 4-4 6-7 7.500C4.500 14 .5 12 .5 8V3z" fill="#fff" />
          <path d="M7.500 1v14M1 7.500h13" stroke="#1c2a3f" strokeWidth="1.500" />
          <circle cx="11.500" cy="11" r="4.500" fill="#169b53" />
          <path d="M9.500 11l1.500 1.500 2.500-3" stroke="#fff" strokeWidth="1.200" />
        </Tray>
        <Tray>
          <path d="M5.500 3.500h10v7h-11v-4M7.500 11v3M3 14.500h10M12 11v3M.5 2.500h4v3h-4zM2.500 6v6" stroke="#fff" shapeRendering="crispEdges" />
        </Tray>
        <Tray>
          <path d="M1 6h2l3.500-3.500v11L3 10H1zM9 5.500l5 5M14 5.500l-5 5" stroke="#fff" strokeWidth="1.200" />
        </Tray>
      </div>
      <div className="ml-[6px] flex w-[66px] flex-col items-center text-[11.5px] leading-[18px] tracking-[-0.35px]">
        <div>18:10</div>
        <div>04/12/2020</div>
      </div>
      <svg viewBox="0 0 18 18" className="mr-[18px] ml-[14px] h-[18px] w-[18px]" fill="none" stroke="#fff" strokeWidth="1.200">
        <path d="M1 1.500h15.500v12h-5L9 16.500 6.500 13.500H1z" />
      </svg>
      <div className="mr-1 h-10 w-px bg-[#6d7889]" />
    </div>
  );
}

const MENU: [string, string, string][] = [
  ["F", "ile", "w-8"],
  ["V", "iew", "w-[39px]"],
  ["P", "lot Settings", "w-[80px]"],
  ["S", "imulation", "w-[71px]"],
  ["T", "ools", "w-[41px]"],
  ["W", "indow", "w-[58px]"],
  ["H", "elp", "w-10"],
];

export default function App() {
  return (
    <div className="relative flex h-[1080px] w-[1920px] flex-col overflow-hidden bg-[#f0f0f0]">
      <div className={`flex h-[23px] items-center bg-white pl-[2px] text-[11.5px] text-black ${UI}`}>
        <LtLogo className="h-[11px] w-[15px]" />
        <div className="ml-[6px] flex-1 tracking-[-0.11px]">LTspice XVII - [Draft2.asc]</div>
        <svg viewBox="0 0 102 11" className="mr-[20px] h-[11px] w-[102px]" fill="none" stroke="#000">
          <path d="M0 6.500h10M45.500 3.500h7v7h-7zM47.500 3v-2.500h7v7H53" shapeRendering="crispEdges" />
          <path d="M91.500.5l10 10M101.500.5l-10 10" />
        </svg>
      </div>
      <div className={`flex h-[21px] items-center border-b border-[#a0a0a0] text-[11.5px] text-black ${UI}`}>
        <svg viewBox="0 0 17 18" className="mr-[7px] ml-1 h-[18px] w-[17px]" fill="none">
          <path d="M2 0h15v16H2z" fill="#c0c0c0" />
          <path d="M1.500 1v17M0 15.500h17M0 4.500h2M0 8.500h2M0 12.500h2M5.500 15v3M9.500 15v3M13.500 15v3" stroke="#000" shapeRendering="crispEdges" />
          <path d="M3 5l3-3 3 3" stroke="#0000c0" />
          <path d="M3 8l3 2M8 10h3M13 11l3-1" stroke="#f00" strokeWidth="1.400" />
          <path d="M8 13h1M12 13.500h1" stroke="#0000c0" />
        </svg>
        {MENU.map(([u, rest, w]) => (
          <div key={u} className={`${w} whitespace-nowrap`}>
            <span className="underline underline-offset-2">{u}</span>
            {rest}
          </div>
        ))}
        <div className="mr-px ml-auto flex gap-px">
          {["M5 10.500h6", "M7.500 4v-.5h5v4h-1.500M5.500 6.500h5v4h-5zM5.500 7.500h5", "M5.500 4.500l6 6M11.500 4.500l-6 6"].map((d, i) => (
            <svg key={d} viewBox="0 0 17 17" className="h-[18px] w-[18px] border border-[#e0e0e0] bg-white" fill="none">
              <path d={d} stroke="#6f8190" strokeWidth={i === 1 ? 1.3 : 2} />
            </svg>
          ))}
        </div>
      </div>
      <div className="flex h-9 bg-white">
        <Toolbar />
      </div>
      <div className="h-[941px] border-t border-l border-[#a0a0a0]">
        <div className="h-[940px] border-t border-l border-[#696969]">
          <div className="flex h-[27px] flex-col">
            <div className={`flex h-[21px] items-end text-[11.5px] text-black ${UI}`}>
              <div className="flex h-[21px] w-[86px] items-center bg-white pl-[7px]">
                <svg viewBox="0 0 17 17" className="h-[17px] w-[17px] shrink-0" fill="none">
                  <path d="M3 0h14v14H3z" fill="#c0c0c0" />
                  <path d="M2.500 0v17M0 14.500h17M0 3.500h2M0 7.500h2M0 11.500h2M5.500 14v3M9.500 14v3M13.500 14v3" stroke="#000" shapeRendering="crispEdges" />
                  <path d="M3 8l4-3 4 3 5-4" stroke="#f00" strokeWidth="1.600" />
                </svg>
                <div className="ml-[5px] tracking-[-0.5px]">Draft2.asc</div>
              </div>
              <div className="flex h-5 w-[80px] items-center border border-l-0 border-[#d9d9d9] pl-[7px]">
                <svg viewBox="0 0 12 16" className="h-4 w-3" fill="none" stroke="#0000e0">
                  <path d="M4.500 3v10" strokeWidth="2" />
                  <path d="M0 8h4M5 6l5-5M5 10l5 5M10.500 12v3.500H7" strokeWidth="1.300" />
                </svg>
                <div className="ml-[8px] tracking-[-0.5px]">Draft2.asc</div>
              </div>
            </div>
            <div className="mr-1 h-[3px] border border-l-0 border-[#d9d9d9] bg-white" />
          </div>
          <Plot />
          <div className="h-0.5 border-b border-[#f0f0f0] bg-white" />
        </div>
      </div>
      <div className={`-mt-px flex h-[20px] items-center border-t border-[#d4d4d4] pt-px pl-[2px] text-[11.5px] text-black ${UI}`}>
        Right-Click to manually enter Horizontal Axis Limits
      </div>
      <Taskbar />
      <CursorDialog />
    </div>
  );
}
